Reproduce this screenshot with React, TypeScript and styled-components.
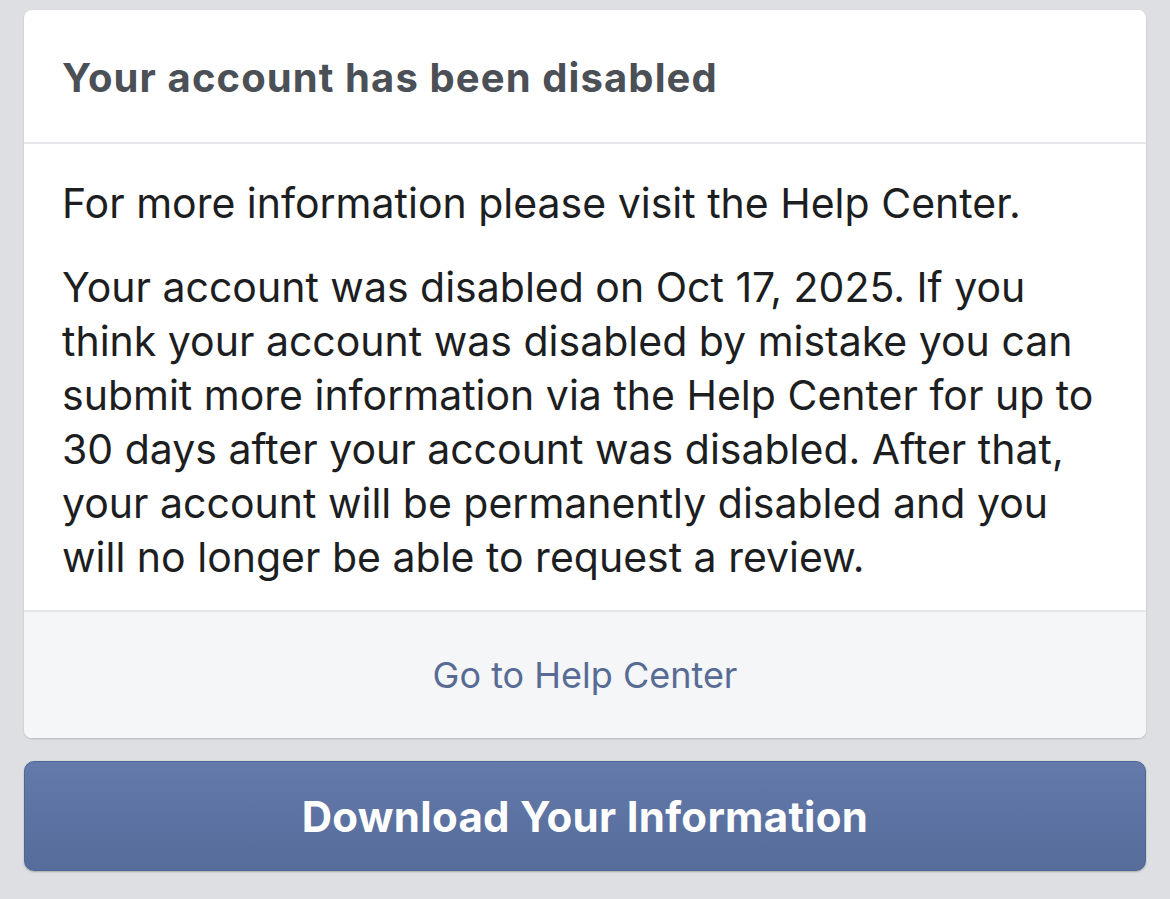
import styled, { createGlobalStyle } from 'styled-components';

const GlobalStyle = createGlobalStyle`
  html, body {
    margin: 0;
    padding: 0;
    background: #dddfe2;
  }
  body {
    font-family: Inter, 'Liberation Sans', Arial, sans-serif;
    -webkit-font-smoothing: antialiased;
  }
`;

const App = () => {
  return (
    <>
      <GlobalStyle />
      <Page>
        <Card>
          <Header>
            <Title>Your account has been disabled</Title>
          </Header>
          <Body>
            <Paragraph>For more information please visit the Help Center.</Paragraph>
            <Paragraph>
              Your account was disabled on Oct 17, 2025. If you think your account was disabled by
              mistake you can submit more information via the Help Center for up to 30 days after
              your account was disabled. After that, your account will be permanently disabled and
              you will no longer be able to request a review.
            </Paragraph>
          </Body>
          <Footer>
            <HelpLink href="#">Go to Help Center</HelpLink>
          </Footer>
        </Card>
        <DownloadButton type="button">Download Your Information</DownloadButton>
      </Page>
    </>
  );
};

export default App;

const Page = styled.div`
  width: 1170px;
  height: 899px;
  box-sizing: border-box;
  padding: 10px 24px 0;
  display: flex;
  flex-direction: column;
  gap: 23px;
`;

const Card = styled.div`
  background: #fff;
  border-radius: 8px;
  box-shadow: 0 1px 2px rgba(0, 0, 0, 0.18);
  overflow: hidden;
`;

const Header = styled.div`
  height: 134px;
  box-sizing: border-box;
  padding: 2px 38px 0;
  display: flex;
  align-items: center;
  border-bottom: 2px solid #e5e6e9;
`;

const Title = styled.h1`
  margin: 0;
  font-size: 40px;
  font-weight: 700;
  letter-spacing: 1.1px;
  color: #4b4f56;
`;

const Body = styled.div`
  padding: 32px 38px 26px;
  border-bottom: 2px solid #e5e6e9;
`;

const Paragraph = styled.p`
  margin: 0 0 30px;
  font-size: 41px;
  line-height: 54px;
  color: #1c1e21;

  &:last-child {
    margin-bottom: 0;
  }
`;

const Footer = styled.div`
  height: 126px;
  background: #f5f6f7;
  display: flex;
  align-items: center;
  justify-content: center;
`;

const HelpLink = styled.a`
  font-size: 36px;
  color: #576b95;
  text-decoration: none;
`;

const DownloadButton = styled.button`
  height: 110px;
  border: 1px solid #4f6594;
  border-radius: 10px;
  background: linear-gradient(#637aaa, #566c9b);
  box-shadow: 0 1px 2px rgba(0, 0, 0, 0.25);
  color: #fff;
  font-family: Inter, 'Liberation Sans', Arial, sans-serif;
  font-size: 42px;
  font-weight: 700;
  letter-spacing: 0.3px;
  cursor: pointer;
`;
